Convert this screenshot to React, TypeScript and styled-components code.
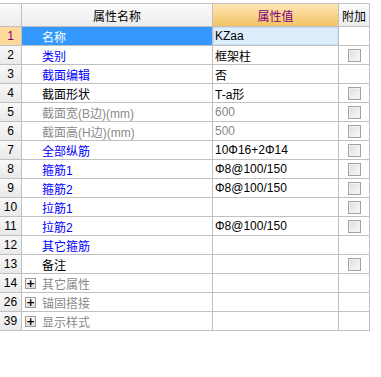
import React from "react";
import styled, { createGlobalStyle, css } from "styled-components";

const Global = createGlobalStyle`
  html, body { margin: 0; padding: 0; background: #ffffff; }
  body { font-family: "Liberation Sans", "Noto Sans CJK SC", sans-serif; font-size: 12px; }
`;

const Wrapper = styled.div`
  padding-top: 3px;
  width: 381px;
  height: 374px;
  background: #ffffff;
`;

const Grid = styled.div`
  width: 370px;
  border-top: 1px solid #c4c4c4;
`;

const Row = styled.div<{ $header?: boolean }>`
  display: grid;
  grid-template-columns: 22px 191px 126px 31px;
  height: ${(p) => (p.$header ? 23 : 19)}px;
`;

const Cell = styled.div`
  box-sizing: border-box;
  border-right: 1px solid #c0c0c0;
  border-bottom: 1px solid #c0c0c0;
  display: flex;
  align-items: center;
  overflow: hidden;
  white-space: nowrap;
`;

const HeadCell = styled(Cell)<{ $accent?: boolean }>`
  justify-content: center;
  font-size: 12px;
  color: ${(p) => (p.$accent ? "#800080" : "#000000")};
  background: ${(p) =>
    p.$accent
      ? "linear-gradient(#fde6b4, #f3c364)"
      : "linear-gradient(#fbfbfb, #ececec)"};
`;

const NumCell = styled(Cell)<{ $active?: boolean }>`
  justify-content: center;
  font-size: 12px;
  color: ${(p) => (p.$active ? "#800080" : "#000000")};
  background: ${(p) =>
    p.$active ? "#fdd99b" : "linear-gradient(#f8f8f8, #e9e9e9)"};
`;

type Tone = "blue" | "black" | "gray" | "selected";

const toneColor: Record<Tone, string> = {
  blue: "#0000ff",
  black: "#000000",
  gray: "#8a8a8a",
  selected: "#ffffff",
};

const NameCell = styled(Cell)<{ $tone: Tone; $group?: boolean }>`
  padding-left: ${(p) => (p.$group ? 3 : 20)}px;
  gap: 6px;
  font-size: 12px;
  color: ${(p) => toneColor[p.$tone]};
  background: ${(p) => (p.$tone === "selected" ? "#3399ff" : "#ffffff")};
`;

const ValueCell = styled(Cell)<{ $gray?: boolean; $active?: boolean }>`
  padding-left: 2px;
  font-size: 12px;
  color: ${(p) => (p.$gray ? "#8a8a8a" : "#000000")};
  background: ${(p) => (p.$active ? "#deedfc" : "#ffffff")};
  ${(p) =>
    p.$active &&
    css`
      box-shadow: inset 0 0 0 1px #c9def5;
    `}
`;

const ExtraCell = styled(Cell)`
  justify-content: center;
  background: #ffffff;
`;

const Check = styled.span`
  box-sizing: border-box;
  width: 13px;
  height: 13px;
  border: 1px solid #a2a2a2;
  background: linear-gradient(135deg, #dcdcdc, #fafafa);
  box-shadow: inset 0 0 0 1px #f2f2f2;
`;

const Expander = styled.span`
  box-sizing: border-box;
  width: 11px;
  height: 11px;
  border: 1px solid #9c9c9c;
  background: linear-gradient(#fafafa, #dedede);
  display: flex;
  align-items: center;
  justify-content: center;
  color: #000;
  font-size: 11px;
  line-height: 1;
  font-family: "DejaVu Sans", sans-serif;
  font-weight: bold;
`;

type RowData = {
  n: string;
  name: string;
  tone: Tone;
  value?: string;
  grayValue?: boolean;
  check?: boolean;
  group?: boolean;
  active?: boolean;
};

const rows: RowData[] = [
  { n: "1", name: "名称", tone: "selected", value: "KZaa", active: true },
  { n: "2", name: "类别", tone: "blue", value: "框架柱", check: true },
  { n: "3", name: "截面编辑", tone: "blue", value: "否" },
  { n: "4", name: "截面形状", tone: "black", value: "T-a形", check: true },
  { n: "5", name: "截面宽(B边)(mm)", tone: "gray", value: "600", grayValue: true, check: true },
  { n: "6", name: "截面高(H边)(mm)", tone: "gray", value: "500", grayValue: true, check: true },
  { n: "7", name: "全部纵筋", tone: "blue", value: "10Φ16+2Φ14", check: true },
  { n: "8", name: "箍筋1", tone: "blue", value: " Φ8@100/150", check: true },
  { n: "9", name: "箍筋2", tone: "blue", value: " Φ8@100/150", check: true },
  { n: "10", name: "拉筋1", tone: "blue", check: true },
  { n: "11", name: "拉筋2", tone: "blue", value: " Φ8@100/150", check: true },
  { n: "12", name: "其它箍筋", tone: "blue" },
  { n: "13", name: "备注", tone: "black", check: true },
  { n: "14", name: "其它属性", tone: "gray", group: true },
  { n: "26", name: "锚固搭接", tone: "gray", group: true },
  { n: "39", name: "显示样式", tone: "gray", group: true },
];

export default function App() {
  return (
    <Wrapper>
      <Global />
      <Grid>
        <Row $header>
          <HeadCell />
          <HeadCell>属性名称</HeadCell>
          <HeadCell $accent>属性值</HeadCell>
          <HeadCell>附加</HeadCell>
        </Row>
        {rows.map((r) => (
          <Row key={r.n}>
            <NumCell $active={r.active}>{r.n}</NumCell>
            <NameCell $tone={r.tone} $group={r.group}>
              {r.group && <Expander>+</Expander>}
              {r.name}
            </NameCell>
            <ValueCell $gray={r.grayValue} $active={r.active}>
              {r.value ?? ""}
            </ValueCell>
            <ExtraCell>{r.check && <Check />}</ExtraCell>
          </Row>
        ))}
      </Grid>
    </Wrapper>
  );
}
